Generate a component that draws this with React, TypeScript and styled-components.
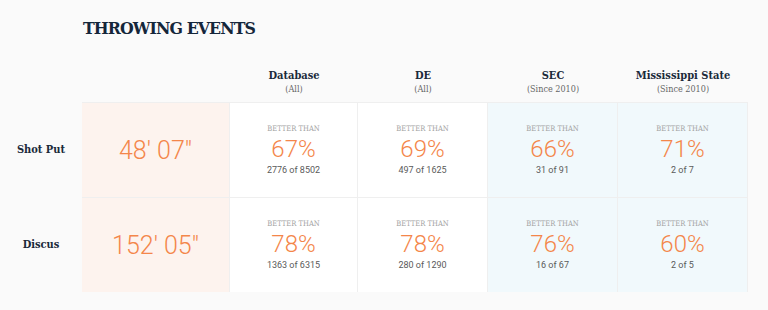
import React from 'react'
import styled, { createGlobalStyle } from 'styled-components'

const GlobalStyle = createGlobalStyle`
  html, body {
    margin: 0;
    padding: 0;
    background: #fafafa;
  }
`

const SLAB = `'DejaVu Serif Condensed', 'DejaVu Serif', 'Liberation Serif', serif`
const SANS = `Roboto, 'Liberation Sans', sans-serif`
const ORANGE = '#f4864a'
const LINE = '#efefef'

const Page = styled.main`
  width: 768px;
  height: 310px;
  box-sizing: border-box;
  padding: 16px 0 0 0;
  overflow: hidden;
`

const Title = styled.h2`
  margin: 0 0 0 83px;
  font-family: ${SLAB};
  font-stretch: condensed;
  font-size: 17.5px;
  line-height: 24px;
  font-weight: 700;
  color: #14263a;
  letter-spacing: -0.9px;
`

const Table = styled.div`
  margin-top: 22px;
  display: grid;
  grid-template-columns: 82px 148px 128px 130px 130px 130px;
  grid-template-rows: 40px 95px 95px;
`

const HeadCell = styled.div`
  display: flex;
  flex-direction: column;
  align-items: center;
  justify-content: flex-end;
  padding-bottom: 6px;
`

const HeadName = styled.div`
  font-family: ${SLAB};
  font-stretch: condensed;
  font-weight: 700;
  font-size: 11px;
  line-height: 15px;
  color: #1b2a3a;
`

const HeadSub = styled.div`
  font-family: ${SLAB};
  font-stretch: condensed;
  font-size: 9px;
  line-height: 13px;
  color: #666;
`

const RowLabel = styled.div`
  display: flex;
  align-items: center;
  justify-content: center;
  font-family: ${SLAB};
  font-stretch: condensed;
  font-weight: 700;
  font-size: 11px;
  color: #1b2a3a;
`

type Tint = 'mark' | 'plain' | 'conf'

const tints: Record<Tint, string> = {
  mark: '#fdf3ee',
  plain: '#ffffff',
  conf: '#f1f9fc',
}

const Cell = styled.div<{ $tint: Tint }>`
  display: flex;
  flex-direction: column;
  align-items: center;
  justify-content: center;
  background: ${p => tints[p.$tint]};
  border-top: 1px solid ${LINE};
  border-right: 1px solid ${LINE};
  box-sizing: border-box;
`

const Mark = styled.div`
  font-family: ${SANS};
  font-weight: 300;
  font-size: 25px;
  color: ${ORANGE};
`

const Better = styled.div`
  font-family: ${SLAB};
  font-stretch: condensed;
  font-size: 7.5px;
  line-height: 10px;
  color: #a3a3a3;
  text-transform: uppercase;
`

const Pct = styled.div`
  font-family: ${SANS};
  font-weight: 300;
  font-size: 24px;
  line-height: 30px;
  color: ${ORANGE};
`

const Count = styled.div`
  font-family: ${SANS};
  font-size: 9px;
  line-height: 12px;
  color: #5a5a5a;
`

const columns = [
  { name: 'Database', sub: '(All)', tint: 'plain' as Tint },
  { name: 'DE', sub: '(All)', tint: 'plain' as Tint },
  { name: 'SEC', sub: '(Since 2010)', tint: 'conf' as Tint },
  { name: 'Mississippi State', sub: '(Since 2010)', tint: 'conf' as Tint },
]

const events = [
  {
    label: 'Shot Put',
    mark: `48' 07"`,
    stats: [
      ['67%', '2776 of 8502'],
      ['69%', '497 of 1625'],
      ['66%', '31 of 91'],
      ['71%', '2 of 7'],
    ],
  },
  {
    label: 'Discus',
    mark: `152' 05"`,
    stats: [
      ['78%', '1363 of 6315'],
      ['78%', '280 of 1290'],
      ['76%', '16 of 67'],
      ['60%', '2 of 5'],
    ],
  },
]

const App = () => (
  <>
    <GlobalStyle />
    <Page>
      <Title>THROWING EVENTS</Title>
      <Table>
        <div />
        <div />
        {columns.map(c => (
          <HeadCell key={c.name}>
            <HeadName>{c.name}</HeadName>
            <HeadSub>{c.sub}</HeadSub>
          </HeadCell>
        ))}
        {events.map(ev => (
          <React.Fragment key={ev.label}>
            <RowLabel>{ev.label}</RowLabel>
            <Cell $tint="mark">
              <Mark>{ev.mark}</Mark>
            </Cell>
            {ev.stats.map(([pct, count], i) => (
              <Cell key={i} $tint={columns[i].tint}>
                <Better>Better than</Better>
                <Pct>{pct}</Pct>
                <Count>{count}</Count>
              </Cell>
            ))}
          </React.Fragment>
        ))}
      </Table>
    </Page>
  </>
)

export default App
